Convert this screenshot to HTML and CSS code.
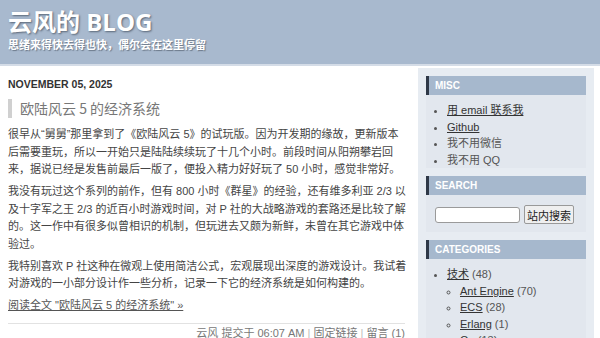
FILE: index.html
```html
<!DOCTYPE html>
<html lang="zh-CN">
<head>
<meta charset="UTF-8" />
<meta name="viewport" content="width=device-width, initial-scale=1" />
<title>云风的 BLOG</title>
<link rel="stylesheet" href="styles.css">
</head>
<body>

<!-- Site header -->
<div id="header">
  <h1 class="siteTitle">云风的 BLOG</h1>
  <div class="siteDesc">思绪来得快去得也快，偶尔会在这里停留</div>
</div>

<div id="wrap">

  <!-- Main column -->
  <div id="main">
    <div class="dateHeader">November 05, 2025</div>
    <h2 class="entryTitle">欧陆风云 5 的经济系统</h2>
    <div class="entryBody">
      <p>很早从“舅舅”那里拿到了《欧陆风云 5》的试玩版。因为开发期的缘故，更新版本后需要重玩，所以一开始只是陆陆续续玩了十几个小时。前段时间从阳朔攀岩回来，据说已经是发售前最后一版了，便投入精力好好玩了 50 小时，感觉非常好。</p>
      <p>我没有玩过这个系列的前作，但有 800 小时《群星》的经验，还有维多利亚 2/3 以及十字军之王 2/3 的近百小时游戏时间，对 P 社的大战略游戏的套路还是比较了解的。这一作中有很多似曾相识的机制，但玩进去又颇为新鲜，未曾在其它游戏中体验过。</p>
      <p>我特别喜欢 P 社这种在微观上使用简洁公式，宏观展现出深度的游戏设计。我试着对游戏的一小部分设计作一些分析，记录一下它的经济系统是如何构建的。</p>
      <p><a href="#" class="moreLink">阅读全文 "欧陆风云 5 的经济系统" »</a></p>
    </div>
    <div class="entryFooter">
      云风 提交于 06:07 AM <span class="sep">|</span> <a href="#">固定链接</a> <span class="sep">|</span> <a href="#">留言 (1)</a>
    </div>
  </div>

  <!-- Sidebar -->
  <div id="sidebar">
    <div class="widget">
      <div class="widgetTitle">Misc</div>
      <ul class="widgetList">
        <li><a href="#">用 email 联系我</a></li>
        <li><a href="#">Github</a></li>
        <li>我不用微信</li>
        <li>我不用 QQ</li>
      </ul>
    </div>

    <div class="widget">
      <div class="widgetTitle">Search</div>
      <form class="searchForm" onsubmit="return false">
        <input type="text" class="searchInput" />
        <button type="submit" class="searchBtn">站内搜索</button>
      </form>
    </div>

    <div class="widget">
      <div class="widgetTitle">Categories</div>
      <ul class="widgetList">
        <li><a href="#">技术</a> (48)
          <ul class="subList">
            <li><a href="#">Ant Engine</a> (70)</li>
            <li><a href="#">ECS</a> (28)</li>
            <li><a href="#">Erlang</a> (1)</li>
            <li><a href="#">Go</a> (13)</li>
          </ul>
        </li>
      </ul>
    </div>
  </div>

</div>

</body>
</html>
```

FILE: styles.css
```css
body {
  margin: 0;
  background: white;
  color: #444;
  font-family: "Liberation Sans", "Noto Sans CJK SC", sans-serif;
  font-size: 11px;
  overflow: hidden;
}
a {
  color: #444;
}

/* Header */
#header {
  height: 64px;
  background: #a8b9ce;
  border-bottom: 2px solid #d4dce7;
  padding: 0 8px;
  box-sizing: content-box;
}
.siteTitle {
  margin: 0;
  padding-top: 7px;
  font-family: "Open Sans", "Noto Sans CJK SC", sans-serif;
  font-size: 24px;
  line-height: 30px;
  font-weight: bold;
  color: white;
  text-shadow: 1px 1px 2px #5a6778;
}
.siteDesc {
  margin-top: 0;
  font-family: "Noto Sans CJK SC", sans-serif;
  font-size: 11px;
  line-height: 14px;
  font-weight: bold;
  color: white;
  text-shadow: 1px 1px 1px #6a7788;
}

/* Layout */
#wrap {
  display: flex;
  align-items: flex-start;
  padding-top: 2px;
}
#main {
  width: 399px;
  margin-left: 8px;
  flex: none;
}
#sidebar {
  width: 176px;
  margin-left: 11px;
  flex: none;
  background: #e7ecf2;
  padding: 8px 8px 20px 8px;
  box-sizing: border-box;
}

/* Entry */
.dateHeader {
  margin-top: 9px;
  font-size: 10.5px;
  line-height: 14px;
  font-weight: bold;
  color: #333;
  text-transform: uppercase;
}
.entryTitle {
  margin: 8px 0 0 0;
  border-left: 4px solid #d0d0d0;
  padding-left: 8px;
  font-family: "Noto Sans CJK SC", sans-serif;
  font-size: 14px;
  line-height: 19px;
  font-weight: normal;
  color: #777;
}
.entryBody {
  margin-top: 8px;
}
.entryBody p {
  margin: 0 0 4.5px 0;
  line-height: 17.5px;
}
.moreLink {
  color: #555;
}
.entryFooter {
  margin-top: 8px;
  margin-right: 2px;
  border-top: 1px solid #e2e2e2;
  padding-top: 1px;
  text-align: right;
  line-height: 17.5px;
  color: #777;
}
.entryFooter a {
  color: #777;
  text-decoration: none;
}
.entryFooter .sep {
  color: #bbb;
}

/* Sidebar widgets */
.widget {
  background: #e2e7ee;
  margin-bottom: 8px;
}
.widgetTitle {
  height: 19px;
  line-height: 19px;
  background: #a6b8cd;
  border-left: 3px solid #2e3847;
  padding-left: 6px;
  font-size: 10px;
  font-weight: bold;
  color: white;
  text-transform: uppercase;
}
.widgetList {
  margin: 7px 0 0 0;
  padding: 0 0 0 21px;
  line-height: 16.5px;
  color: #555;
}
.widgetList a {
  color: #333;
}
.subList {
  margin: 0;
  padding-left: 13px;
  list-style: circle;
}

/* Search */
.searchForm {
  display: flex;
  align-items: center;
  gap: 4px;
  padding: 10px 9px 8px 9px;
}
.searchInput {
  width: 85px;
  height: 16px;
  box-sizing: border-box;
  border: 1px solid #9a9a9a;
  border-radius: 3px;
  background: white;
  padding: 0 3px;
  margin: 0;
}
.searchBtn {
  height: 19px;
  padding: 0 2px;
  margin: 0;
  border: 1px solid #999;
  border-radius: 2px;
  background: #efefef;
  font-family: "Noto Sans CJK SC", sans-serif;
  font-size: 11px;
  color: #222;
  cursor: pointer;
}
```
